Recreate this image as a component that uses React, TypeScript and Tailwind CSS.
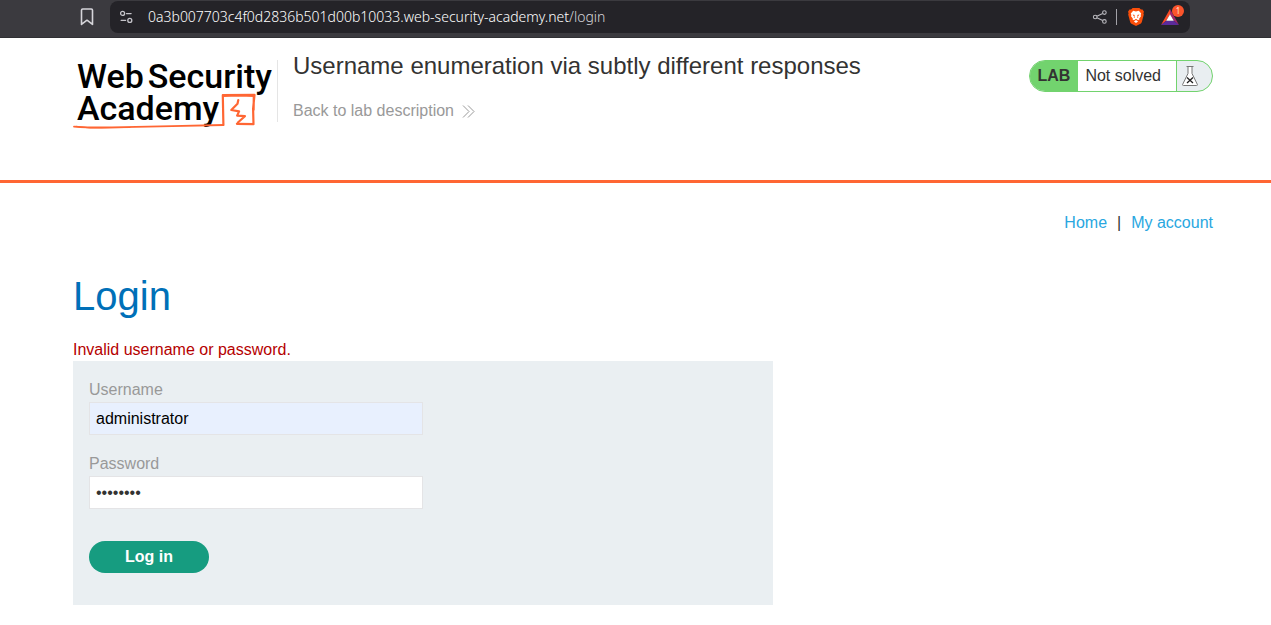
import React, { useState } from "react";
import type { ReactNode } from "react";

function BookmarkIcon() {
  return (
    <svg width="14" height="18" viewBox="0 0 14 18" fill="none" stroke="#d6d5da" strokeWidth="1.6" strokeLinejoin="round">
      <path d="M1.5 2.2Q1.5 1 2.7 1h8.6q1.2 0 1.2 1.2v14.2L7 12.2l-5.5 4.2z" />
    </svg>
  );
}

function TuneIcon() {
  return (
    <svg width="14" height="14" viewBox="0 0 14 14" fill="none" stroke="#c4c3c9" strokeWidth="1.3" strokeLinecap="round">
      <circle cx="3.6" cy="3.4" r="2" />
      <path d="M7.5 3.6h4.6M2.200 10.400h4.400" />
      <circle cx="10.800" cy="10.400" r="2" />
    </svg>
  );
}

function ShareIcon() {
  return (
    <svg width="16" height="16" viewBox="0 0 16 16" fill="none" stroke="#b9b8be" strokeWidth="1.1">
      <circle cx="3.2" cy="8" r="1.8" />
      <circle cx="12.4" cy="3.6" r="1.8" />
      <circle cx="12.4" cy="12.4" r="1.8" />
      <path d="M4.9 7.2l5.8-2.8M4.9 8.8l5.8 2.8" />
    </svg>
  );
}

function BraveIcon() {
  return (
    <svg width="16" height="18" viewBox="0 0 16 18">
      <path fill="#fb4f0a" d="M4.6 0h6.8l1.5 1.6 1.6-.1 1.5 2.3-.6 1.5.4 1.3-1.9 7.1q-.4 1.3-1.4 2L8 18l-4.5-2.3q-1-.7-1.4-2L.2 6.6l.4-1.3L0 3.8l1.5-2.3 1.6.1z" />
      <path fill="#fff" d="M5.2 2.8L8 3.4l2.8-.6 2.4 2.8-.6 1.4.4 1.3-1.8 2.3.2.9-1.4.8L8 10.7l-2 1.6-1.4-.8.2-.9L3 8.3 3.4 7l-.6-1.4zM8 12l2.1 1.4L8 15l-2.1-1.6z" />
      <path fill="#fb4f0a" d="M4.5 6.4l2.4.5-.6 1.2.6 1.5-1.1.5.2-1.5zM11.5 6.4l-2.4.5.6 1.2-.6 1.5 1.1.5-.2-1.5z" />
    </svg>
  );
}

function RewardsIcon() {
  return (
    <svg width="18" height="16" viewBox="0 0 18 16">
      <path fill="#fb4a26" d="M9 0v5.2L5.2 11.8 0 16z" />
      <path fill="#a3286c" d="M9 0l9 16-5.2-4.2L9 5.2z" />
      <path fill="#5b2b9a" d="M0 16l5.2-4.2h7.6L18 16z" />
      <path fill="#fff" d="M9 5.2l3.8 6.6H5.2z" />
    </svg>
  );
}

function BrowserBar() {
  return (
    <div className="flex h-[38px] items-start border-b border-[#303034] bg-[#3b3a3f] pt-px pr-[81px] pl-20">
      <button type="button" aria-label="Bookmark" className="flex h-8 w-[30px] items-center">
        <BookmarkIcon />
      </button>
      <div className="flex h-8 min-w-0 flex-1 items-center rounded-lg bg-[#242328] pr-[11px] pl-[9px]">
        <button type="button" aria-label="Site information">
          <TuneIcon />
        </button>
        <span className="ml-[15px] flex-1 truncate font-['Noto_Sans',sans-serif] text-[14px] leading-5 font-light text-white">
          0a3b007703c4f0d2836b501d00b10033.web-security-academy.net<span className="text-[#d4d3d9]">/login</span>
        </span>
        <button type="button" aria-label="Share">
          <ShareIcon />
        </button>
        <span className="mx-2 h-4 w-px bg-[#a3a2a8]" />
        <button type="button" aria-label="Shields" className="ml-[3px]">
          <BraveIcon />
        </button>
        <button type="button" aria-label="Rewards" className="relative ml-[17px]">
          <RewardsIcon />
          <span className="absolute -top-1 -right-[5px] flex size-3 items-center justify-center rounded-full bg-[#fb542b] font-['Noto_Sans',sans-serif] text-[8px] leading-3 text-[#ffe0d6]">
            1
          </span>
        </button>
      </div>
    </div>
  );
}

function Logo() {
  return (
    <div className="relative h-[72px] w-[204px] shrink-0">
      <div className="pl-1 font-['Roboto',sans-serif] text-[34px] leading-[32px] font-medium text-black">
        <div className="flex gap-1">
          <span>Web</span>
          <span>Security</span>
        </div>
        <div>Academy</div>
      </div>
      <svg className="absolute bottom-0 left-0" width="186" height="40" viewBox="0 0 186 40" fill="none" stroke="#ff6633" strokeLinejoin="round" strokeLinecap="round">
        <path strokeWidth="1.8" d="M1 34.600q16 1.200 38 .8t60-1.200 51.300-1.200" />
        <path strokeWidth="1.200" d="M3 34.300l14 1.600 40-.4" />
        <path strokeWidth="2.200" d="M150.400 33l-.6-29.800 31.700-.4-1.400 14 .4 15.400-16.600-.4M150 3.800l16-.4 14.800.6-.2 14" />
        <path strokeWidth="2.200" d="M165.300 8l-.8 3.800-6.200 6.200 7.800 1.400-2 4.200 7.800.6-7 6.300" />
      </svg>
    </div>
  );
}

function LabStatus() {
  return (
    <div className="flex h-8 shrink-0 overflow-hidden rounded-full border border-[#72d36e] bg-[#e9eef1] text-base leading-[30px] text-[#333332]">
      <span className="bg-[#72d36e] px-2 font-bold">LAB</span>
      <span className="border-r border-[#72d36e] bg-white pr-[15px] pl-[7px]">Not solved</span>
      <span className="flex w-[35px] items-center pl-[5px]">
        <svg width="16" height="22" viewBox="0 0 16 22" fill="#fff" stroke="#777" strokeWidth="1">
          <path d="M4.500 1.500h7M6 1.500v7L.6 19.500q-.2 1 .8 1h13.200q1 0 .8-1L10 8.500v-7" />
          <path fill="none" stroke="#222" strokeWidth="1.300" d="M5 12.500l6 5.500M11 12.500L5 18" />
        </svg>
      </span>
    </div>
  );
}

function Field({ id, label, children }: { id: string; label: string; children: ReactNode }) {
  return (
    <div className="flex flex-col">
      <label htmlFor={id} className="leading-6 text-[#999999]">
        {label}
      </label>
      {children}
    </div>
  );
}

export default function App() {
  const [username, setUsername] = useState("administrator");
  const [password, setPassword] = useState("password");

  return (
    <div className="bg-white font-['Liberation_Sans',Arial,sans-serif] text-base text-[#333332]">
      <BrowserBar />
      <header className="flex min-h-[145px] items-start border-b-3 border-[#ff6633] pt-[22px] pr-[58px] pl-[73px]">
        <Logo />
        <div className="flex flex-1 justify-between">
          <div className="h-[62px] border-l border-[#e5e5e5] pl-[15px]">
            <div className="-mt-2">
              <h2 className="text-2xl leading-7">Username enumeration via subtly different responses</h2>
              <a href="#description" className="mt-[19px] flex items-center gap-2 leading-6 text-[#999999]">
                Back to lab description
                <svg width="13" height="13" viewBox="0 0 13 13" fill="none" stroke="#999" strokeWidth="1">
                  <path d="M1 .5l6 6-6 6M6 .5l6 6-6 6" />
                </svg>
              </a>
            </div>
          </div>
          <LabStatus />
        </div>
      </header>

      <main className="pr-[58px] pl-[73px]">
        <nav className="flex justify-end gap-[10px] pt-7 leading-6">
          <a href="#home" className="text-[#29a7df]">Home</a>
          <span>|</span>
          <a href="#account" className="text-[#29a7df]">My account</a>
        </nav>
        <h1 className="mt-[37px] text-[40px] leading-12 text-[#0070b8]">Login</h1>
        <p className="mt-[18px] leading-[23px] text-[#b50000]">Invalid username or password.</p>
        <form
          className="max-w-[700px] bg-[#eaeff2] px-4 pt-[17px] pb-8"
          onSubmit={(event) => event.preventDefault()}
        >
          <div className="flex max-w-[334px] flex-col gap-[17px]">
            <Field id="username" label="Username">
              <input
                id="username"
                type="text"
                value={username}
                onChange={(event) => setUsername(event.target.value)}
                className="h-[33px] w-full border border-[#e4e4e6] bg-[#e8f0fe] px-[6px] text-black outline-none"
              />
            </Field>
            <Field id="password" label="Password">
              <input
                id="password"
                type="password"
                value={password}
                onChange={(event) => setPassword(event.target.value)}
                className="h-[33px] w-full border border-[#e4e4e6] bg-white px-[6px] outline-none"
              />
            </Field>
          </div>
          <button type="submit" className="mt-8 h-8 w-[120px] rounded-full bg-[#169c80] font-bold text-white">
            Log in
          </button>
        </form>
      </main>
    </div>
  );
}
